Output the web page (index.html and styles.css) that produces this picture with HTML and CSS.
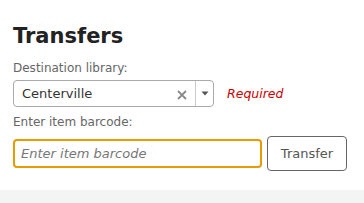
FILE: index.html
```html
<!DOCTYPE html>
<html lang="en">
<head>
    <meta charset="UTF-8">
    <meta name="viewport" content="width=device-width, initial-scale=1.0">
    <title>Transfers</title>
    <link rel="stylesheet" href="styles.css">
</head>
<body>
    <main class="page">
        <h1 class="title">Transfers</h1>

        <div class="field">
            <label class="field-label">Destination library:</label>
            <div class="select-row">
                <div class="select">
                    <span class="select-value">Centerville</span>
                    <span class="select-clear">
                        <svg width="10" height="10" viewBox="0 0 10 10">
                            <path d="M1 1 L9 9 M9 1 L1 9" stroke="#8a8a8a" stroke-width="1.8" fill="none"/>
                        </svg>
                    </span>
                    <span class="select-arrow">
                        <svg width="8" height="5" viewBox="0 0 8 5">
                            <path d="M0.5 0.5 L7.5 0.5 L4 4.5 Z" fill="#555"/>
                        </svg>
                    </span>
                </div>
                <span class="required">Required</span>
            </div>
        </div>

        <div class="field">
            <label class="field-label" for="barcode">Enter item barcode:</label>
            <div class="barcode-row">
                <input class="barcode-input" id="barcode" type="text" placeholder="Enter item barcode" autofocus>
                <button class="btn">Transfer</button>
            </div>
        </div>
    </main>
    <div class="page-bottom"></div>
</body>
</html>
```

FILE: styles.css
```css
* {
    margin: 0;
    padding: 0;
    box-sizing: border-box;
}

body {
    font-family: "DejaVu Sans", sans-serif;
    background-color: #f3f4f4;
    color: #222;
}

.page {
    background-color: #fff;
    height: 190px;
    padding: 24px 13px 0 13px;
}

.title {
    font-size: 21px;
    line-height: 24px;
    font-weight: bold;
    color: #222;
    margin-bottom: 12px;
}

.field-label {
    display: block;
    font-size: 12px;
    line-height: 16px;
    color: #666;
    margin-bottom: 4px;
}

.select-row {
    display: flex;
    align-items: center;
    gap: 13px;
    margin-bottom: 7px;
}

.select {
    display: flex;
    align-items: center;
    width: 201px;
    height: 27px;
    border: 1px solid #aaa;
    border-radius: 4px;
    background-color: #fff;
}

.select-value {
    flex: 1;
    font-size: 13px;
    color: #333;
    padding-left: 8px;
}

.select-clear {
    display: flex;
    align-items: center;
    padding-right: 8px;
    margin-top: 2px;
}

.select-arrow {
    display: flex;
    align-items: center;
    justify-content: center;
    width: 18px;
    height: 100%;
    border-left: 1px solid #ccc;
}

.required {
    font-size: 12.5px;
    font-style: italic;
    color: #c00;
}

.barcode-row {
    display: flex;
    align-items: center;
    gap: 5px;
    margin-top: 6px;
}

.barcode-input {
    width: 249px;
    height: 29px;
    border: 2px solid #e69b00;
    border-radius: 4px;
    padding: 0 6px;
    font-family: "DejaVu Sans", sans-serif;
    font-size: 13px;
    color: #333;
    outline: none;
}

.barcode-input::placeholder {
    font-style: italic;
    color: #777;
}

.btn {
    width: 80px;
    height: 35px;
    background-color: #fff;
    border: 1px solid #666;
    border-radius: 4px;
    font-family: "DejaVu Sans", sans-serif;
    font-size: 13px;
    color: #555;
    cursor: pointer;
}
```
